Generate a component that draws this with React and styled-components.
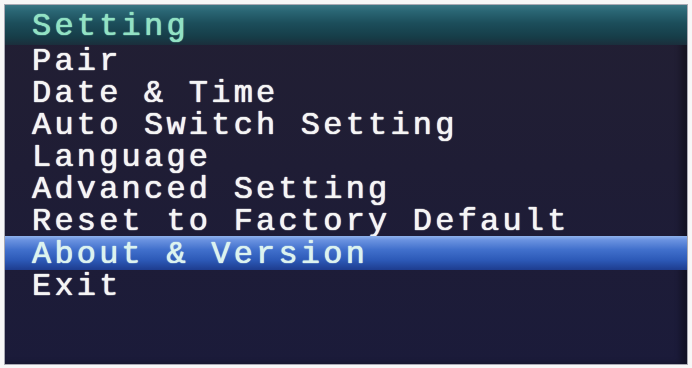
import React from "react";
import styled, { createGlobalStyle } from "styled-components";

const Global = createGlobalStyle`
  html, body { margin: 0; padding: 0; background: #f7f7f7; }
  #root { width: 692px; height: 368px; }
`;

const Frame = styled.div`
  box-sizing: border-box;
  width: 692px;
  height: 368px;
  padding: 4px 4px 3px 4px;
  background: #f7f7f7;
`;

const Screen = styled.div`
  box-sizing: border-box;
  height: 100%;
  border: 1px solid #a9aab4;
  display: flex;
  flex-direction: column;
  background: linear-gradient(180deg, #221f33 0%, #1f1d35 45%, #1b1b3a 100%);
  box-shadow: inset -6px 0 6px rgba(0, 0, 0, 0.35);
  overflow: hidden;
  font-family: "Liberation Mono", "Courier New", monospace;
  font-weight: normal;
  font-size: 32px;
  letter-spacing: 3.2px;
`;

const Header = styled.div`
  box-sizing: border-box;
  height: 40px;
  padding-top: 2px;
  line-height: 40px;
  padding-left: 27px;
  color: #92e2c4;
  background: linear-gradient(
    180deg,
    #3a7683 0%,
    #2a6674 15%,
    #1c4e5b 45%,
    #163d48 80%,
    #1b2e3c 100%
  );
  white-space: pre;
  text-shadow: 0 0 1px #92e2c4, 0 0 1px #92e2c4;
`;

const List = styled.div`
  display: flex;
  flex-direction: column;
`;

const Row = styled.div`
  box-sizing: border-box;
  height: ${(p) => (p.$active ? "34px" : "32px")};
  line-height: ${(p) => (p.$active ? "34px" : "32px")};
  padding-top: ${(p) => (p.$active ? "2px" : "1px")};
  margin-top: ${(p) => (p.$active ? "-1px" : "0")};
  padding-left: 27px;
  white-space: pre;
  color: ${(p) => (p.$active ? "#dcf3ef" : "#f5f5f5")};
  background: ${(p) =>
    p.$active
      ? "linear-gradient(180deg, #8eb2ec 0%, #6a92e0 12%, #4170cc 40%, #2d5ab8 70%, #1d3c8e 100%)"
      : "transparent"};
  text-shadow: ${(p) =>
    p.$active
      ? "0 0 1px #dcf3ef, 0 0 1px #dcf3ef"
      : "0 0 1px #f5f5f5, 0 0 1px #f5f5f5"};
`;

const items = [
  "Pair",
  "Date & Time",
  "Auto Switch Setting",
  "Language",
  "Advanced Setting",
  "Reset to Factory Default",
  "About & Version",
  "Exit",
];

export default function App() {
  return (
    <>
      <Global />
      <Frame>
        <Screen>
          <Header>Setting</Header>
          <List>
            {items.map((t) => (
              <Row key={t} $active={t === "About & Version"}>
                {t}
              </Row>
            ))}
          </List>
        </Screen>
      </Frame>
    </>
  );
}
